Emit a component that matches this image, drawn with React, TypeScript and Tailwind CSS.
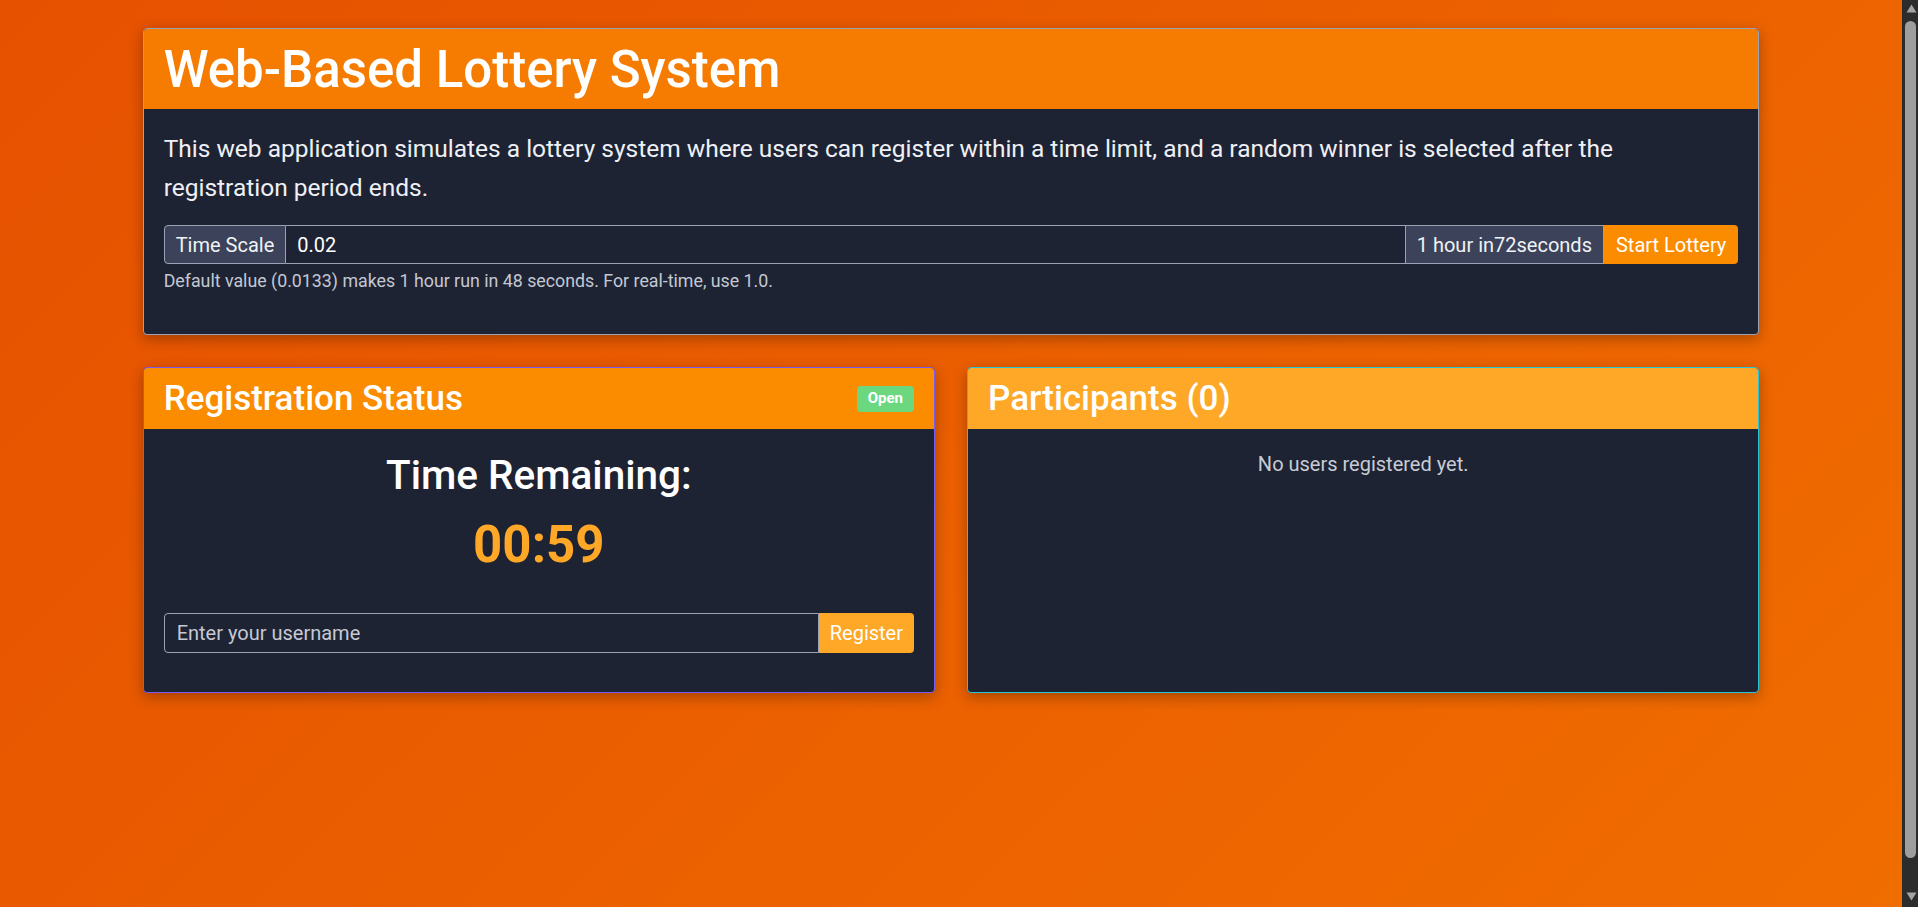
import React from "react";

function Scrollbar() {
  return (
    <div className="flex h-full w-[16px] shrink-0 flex-col bg-[#2c2c2c]">
      <div className="flex h-[17px] items-start justify-center pt-[4px] pl-[2px]">
        <svg width="11" height="9" viewBox="0 0 11 9">
          <polygon points="5.5,0.5 10.5,8.5 0.5,8.5" fill="#a3a3a3" />
        </svg>
      </div>
      <div className="flex-1 pl-[3px] pr-[2px] pt-[4px] pb-[34px]">
        <div className="h-full w-full rounded-full bg-[#9e9e9e]" />
      </div>
      <div className="flex h-[15px] items-start justify-center pl-[2px]">
        <svg width="11" height="9" viewBox="0 0 11 9">
          <polygon points="0.5,0.5 10.5,0.5 5.5,8.5" fill="#a3a3a3" />
        </svg>
      </div>
    </div>
  );
}

export default function App() {
  const font = { fontFamily: "Roboto, 'Noto Sans', sans-serif" } as React.CSSProperties;
  return (
    <div
      className="flex h-screen w-full overflow-hidden bg-[linear-gradient(135deg,#e65100_0%,#f06d00_100%)]"
      style={font}
    >
      <div className="min-w-0 flex-1 pt-[28px]">
        <div className="mx-auto w-[85%]">
          {/* Top card */}
          <div className="overflow-hidden rounded-[4px] border border-[#9aa3b5] bg-[#1e2333] shadow-[0_4px_14px_rgba(0,0,0,0.3)]">
            <div className="flex h-[80px] items-center bg-[#f57c00] px-5">
              <h1 className="text-[51px] font-medium leading-none text-white">Web-Based Lottery System</h1>
            </div>
            <div className="px-5 pb-[41px] pt-[21px]">
              <p className="text-[24.5px] font-normal leading-[38.6px] text-[#eef0f5]">
                This web application simulates a lottery system where users can register within a time limit, and a random winner is selected after the registration period ends.
              </p>
              <div className="mt-[18px] flex h-[39px] text-[20px]">
                <div className="flex items-center rounded-l-[4px] border border-[#9aa3b5] bg-[#3b4259] px-[11px] text-[#f0f2f6]">
                  Time Scale
                </div>
                <div className="flex flex-1 items-center border-y border-[#9aa3b5] px-[11px] text-white">0.02</div>
                <div className="flex items-center border border-[#9aa3b5] bg-[#3b4259] px-[11px] text-[#f0f2f6]">
                  1 hour in72seconds
                </div>
                <button className="flex items-center rounded-r-[4px] bg-[#fb8c00] px-[12px] text-white">Start Lottery</button>
              </div>
              <div className="mt-[5px] text-[17.8px] leading-[24px] text-[#c3c8d2]">
                Default value (0.0133) makes 1 hour run in 48 seconds. For real-time, use 1.0.
              </div>
            </div>
          </div>

          {/* Bottom row */}
          <div className="mt-8 grid grid-cols-2 gap-8">
            <div className="overflow-hidden rounded-[4px] border border-[#7b5cf0] bg-[#1e2333] shadow-[0_4px_14px_rgba(0,0,0,0.3)]">
              <div className="flex h-[61px] items-center justify-between bg-[#fb8c00] px-5">
                <h3 className="text-[35px] font-medium leading-none text-white">Registration Status</h3>
                <span className="flex h-[26px] items-center rounded-[4px] bg-[#6bd87f] px-[11px] text-[15px] font-bold text-white">
                  Open
                </span>
              </div>
              <div className="px-5 pb-[39px] pt-[20px] text-center">
                <h2 className="text-[40.5px] font-medium leading-[52px] text-white">Time Remaining:</h2>
                <div className="mt-[15px] text-[51px] font-bold leading-[57px] text-[#ffa726]">00:59</div>
                <div className="mt-[40px] flex h-[40px] text-[20px]">
                  <input
                    className="min-w-0 flex-1 rounded-l-[4px] border border-[#9aa3b5] bg-transparent px-[12px] text-white outline-none placeholder:text-[#c5c9d3]"
                    placeholder="Enter your username"
                  />
                  <button className="rounded-r-[4px] bg-[#ffa726] px-[11px] text-white">Register</button>
                </div>
              </div>
            </div>
            <div className="overflow-hidden rounded-[4px] border border-[#26c6da] bg-[#1e2333] shadow-[0_4px_14px_rgba(0,0,0,0.3)]">
              <div className="flex h-[61px] items-center bg-[#ffa726] px-5">
                <h3 className="text-[35px] font-medium leading-none text-white">Participants (0)</h3>
              </div>
              <div className="px-5 pt-[21px] text-center text-[20px] leading-[28px] text-[#c8ccd4]">No users registered yet.</div>
            </div>
          </div>
        </div>
      </div>
      <Scrollbar />
    </div>
  );
}
